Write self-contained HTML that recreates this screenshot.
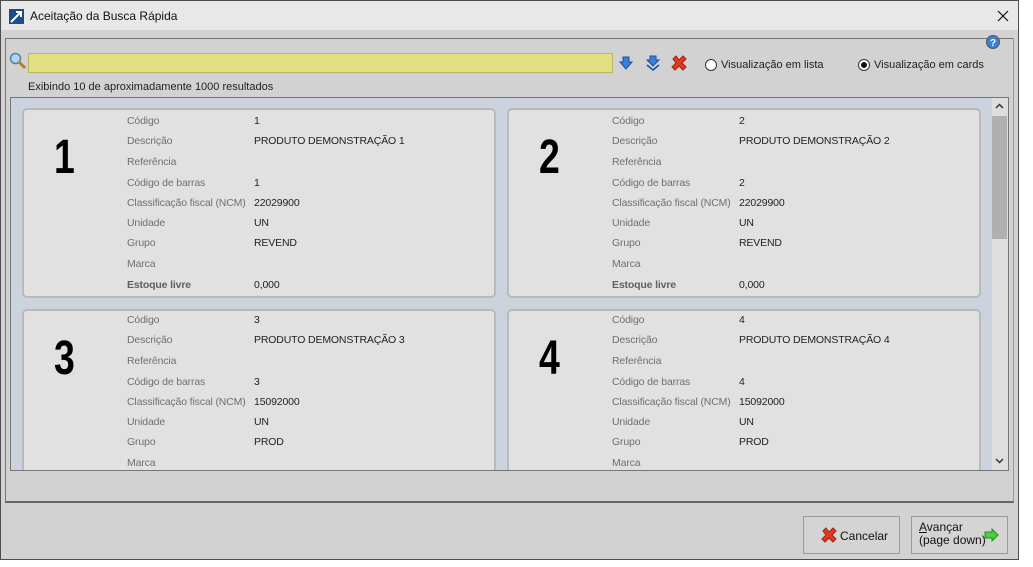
<!DOCTYPE html>
<html><head><meta charset="utf-8"><style>
*{margin:0;padding:0;box-sizing:border-box}
body{width:1033px;height:567px;background:#fff;font-family:"Liberation Sans","DejaVu Sans",sans-serif;font-size:11px;position:relative;overflow:hidden;color:#1e1e1e}
.win{position:absolute;left:0;top:0;width:1019px;height:560px;background:#d2d2d2;border:1px solid #4d4d4d}
.title{position:absolute;left:0;top:0;width:1017px;height:29px;background:#e8e8e8}
.title span{position:absolute;left:29px;top:8px;font-size:12px;color:#111}
.panel{position:absolute;left:4px;top:37px;width:1009px;height:465px;border:1px solid #777;border-bottom:2px solid #666;border-right:1px solid #999}
.search{position:absolute;left:27px;top:52px;width:585px;height:20px;background:#e1e184;border:1px solid #b8b860}
.area{position:absolute;left:9px;top:96px;width:999px;height:374px;background:#cdd2df;border:1px solid #777;overflow:hidden}
.card{position:absolute;width:474px;height:190px;background:#e1e1e1;border:2px solid #b9b9b9;border-radius:5px}
.num{position:absolute;left:30px;top:20px;font-size:48px;font-weight:bold;color:#000;transform:scaleX(.78);transform-origin:left top;font-family:"Liberation Sans",sans-serif}
.row{position:absolute;left:103px;height:14px;white-space:nowrap;font-size:10.5px;letter-spacing:-0.15px}
.row .l{color:#707070;position:absolute;left:0}
.row .v{color:#222;position:absolute;left:127px}
.row b{color:#606060}
.sb{position:absolute;left:981px;top:0;width:16px;height:372px;background:#dedede}
.thumb{position:absolute;left:0;top:18px;width:15px;height:123px;background:#b0b0b0}
.btn{position:absolute;height:38px;border:1px solid #9a9a9a;background:#d4d4d4;font-size:12px;color:#111}
.radio{position:absolute;width:12px;height:12px;border:1px solid #333;border-radius:50%;background:#fff}
</style></head><body>
<div class="win">
<div class="title">
<svg style="position:absolute;left:8px;top:8px" width="15" height="15"><rect width="15" height="15" fill="#1d4c86"/><path d="M2 13L11 4M7 3h5v5" stroke="#fff" stroke-width="2" fill="none"/></svg>
<span>Aceitação da Busca Rápida</span>
<svg style="position:absolute;left:996px;top:9px" width="12" height="12"><path d="M1 1L11 11M11 1L1 11" stroke="#111" stroke-width="1.2"/></svg>
</div>
<div class="panel"></div>
<svg style="position:absolute;left:985px;top:34px" width="14" height="14"><circle cx="7" cy="7" r="6.5" fill="#3d7fd0" stroke="#555"/><text x="7" y="11" font-size="10" font-weight="bold" fill="#fff" text-anchor="middle" font-family="Liberation Sans">?</text></svg>
<svg style="position:absolute;left:8px;top:51px" width="18" height="18"><circle cx="6.5" cy="6.5" r="5" fill="#a9d7f5" stroke="#5b7f9c" stroke-width="1.5"/><path d="M10 10L16 16" stroke="#c07a20" stroke-width="3"/></svg>
<div class="search"></div>
<svg style="position:absolute;left:618px;top:55px" width="14" height="14"><path d="M4 1h6v5h3l-6 7-6-7h3z" fill="#3a7fd8" stroke="#1f4f9a"/></svg>
<svg style="position:absolute;left:644px;top:54px" width="16" height="16"><path d="M5 1h6v4h3l-6 6-6-6h3z" fill="#3a7fd8" stroke="#1f4f9a"/><path d="M2 10l6 5 6-5" fill="none" stroke="#1f4f9a" stroke-width="1.5"/></svg>
<svg style="position:absolute;left:670px;top:54px" width="16" height="16"><path d="M2 4L5 1 8 5 12 1 15 4 11 8 15 12 12 15 8 11 4 15 1 12 5 8z" fill="#e03a20" stroke="#a02010"/></svg>
<div class="radio" style="left:704px;top:58px"></div>
<div style="position:absolute;left:720px;top:58px">Visualização em lista</div>
<div class="radio" style="left:857px;top:58px"><div style="position:absolute;left:2px;top:2px;width:6px;height:6px;border-radius:50%;background:#111"></div></div>
<div style="position:absolute;left:873px;top:58px">Visualização em cards</div>
<div style="position:absolute;left:27px;top:80px">Exibindo 10 de aproximadamente 1000 resultados</div>
<div class="area">
<div class="card" style="left:11px;top:10px"><div class="num">1</div>
<div class="row" style="top:5px"><span class="l">Código</span><span class="v">1</span></div>
<div class="row" style="top:25px"><span class="l">Descrição</span><span class="v">PRODUTO DEMONSTRAÇÃO 1</span></div>
<div class="row" style="top:46px"><span class="l">Referência</span></div>
<div class="row" style="top:67px"><span class="l">Código de barras</span><span class="v">1</span></div>
<div class="row" style="top:87px"><span class="l">Classificação fiscal (NCM)</span><span class="v">22029900</span></div>
<div class="row" style="top:107px"><span class="l">Unidade</span><span class="v">UN</span></div>
<div class="row" style="top:127px"><span class="l">Grupo</span><span class="v">REVEND</span></div>
<div class="row" style="top:148px"><span class="l">Marca</span></div>
<div class="row" style="top:169px"><span class="l"><b>Estoque livre</b></span><span class="v">0,000</span></div>
</div>
<div class="card" style="left:496px;top:10px"><div class="num">2</div>
<div class="row" style="top:5px"><span class="l">Código</span><span class="v">2</span></div>
<div class="row" style="top:25px"><span class="l">Descrição</span><span class="v">PRODUTO DEMONSTRAÇÃO 2</span></div>
<div class="row" style="top:46px"><span class="l">Referência</span></div>
<div class="row" style="top:67px"><span class="l">Código de barras</span><span class="v">2</span></div>
<div class="row" style="top:87px"><span class="l">Classificação fiscal (NCM)</span><span class="v">22029900</span></div>
<div class="row" style="top:107px"><span class="l">Unidade</span><span class="v">UN</span></div>
<div class="row" style="top:127px"><span class="l">Grupo</span><span class="v">REVEND</span></div>
<div class="row" style="top:148px"><span class="l">Marca</span></div>
<div class="row" style="top:169px"><span class="l"><b>Estoque livre</b></span><span class="v">0,000</span></div>
</div>
<div class="card" style="left:11px;top:211px"><div class="num">3</div>
<div class="row" style="top:3px"><span class="l">Código</span><span class="v">3</span></div>
<div class="row" style="top:23px"><span class="l">Descrição</span><span class="v">PRODUTO DEMONSTRAÇÃO 3</span></div>
<div class="row" style="top:44px"><span class="l">Referência</span></div>
<div class="row" style="top:65px"><span class="l">Código de barras</span><span class="v">3</span></div>
<div class="row" style="top:85px"><span class="l">Classificação fiscal (NCM)</span><span class="v">15092000</span></div>
<div class="row" style="top:105px"><span class="l">Unidade</span><span class="v">UN</span></div>
<div class="row" style="top:125px"><span class="l">Grupo</span><span class="v">PROD</span></div>
<div class="row" style="top:146px"><span class="l">Marca</span></div>
</div>
<div class="card" style="left:496px;top:211px"><div class="num">4</div>
<div class="row" style="top:3px"><span class="l">Código</span><span class="v">4</span></div>
<div class="row" style="top:23px"><span class="l">Descrição</span><span class="v">PRODUTO DEMONSTRAÇÃO 4</span></div>
<div class="row" style="top:44px"><span class="l">Referência</span></div>
<div class="row" style="top:65px"><span class="l">Código de barras</span><span class="v">4</span></div>
<div class="row" style="top:85px"><span class="l">Classificação fiscal (NCM)</span><span class="v">15092000</span></div>
<div class="row" style="top:105px"><span class="l">Unidade</span><span class="v">UN</span></div>
<div class="row" style="top:125px"><span class="l">Grupo</span><span class="v">PROD</span></div>
<div class="row" style="top:146px"><span class="l">Marca</span></div>
</div>
<div class="sb"><div class="thumb"></div>
<svg style="position:absolute;left:3px;top:5px" width="9" height="6"><path d="M1 5L4.5 1.5 8 5" stroke="#333" stroke-width="1.5" fill="none"/></svg>
<svg style="position:absolute;left:3px;top:360px" width="9" height="6"><path d="M1 1L4.5 4.5 8 1" stroke="#333" stroke-width="1.5" fill="none"/></svg>
</div>
</div>
<div class="btn" style="left:802px;top:515px;width:97px">
<svg style="position:absolute;left:17px;top:10px" width="16" height="16"><path d="M2 4L5 1 8 5 12 1 15 4 11 8 15 12 12 15 8 11 4 15 1 12 5 8z" fill="#e03a20" stroke="#a02010"/></svg>
<span style="position:absolute;left:36px;top:12px">Cancelar</span></div>
<div class="btn" style="left:910px;top:515px;width:97px">
<span style="position:absolute;left:7px;top:4px;line-height:13px"><u>A</u>vançar<br>(page down)</span>
<svg style="position:absolute;left:72px;top:11px" width="15" height="14"><path d="M1 4h7V1l6 6-6 6v-3H1z" fill="#4ccf3a" stroke="#2a8a20"/></svg>
</div>
</div>
</body></html>
